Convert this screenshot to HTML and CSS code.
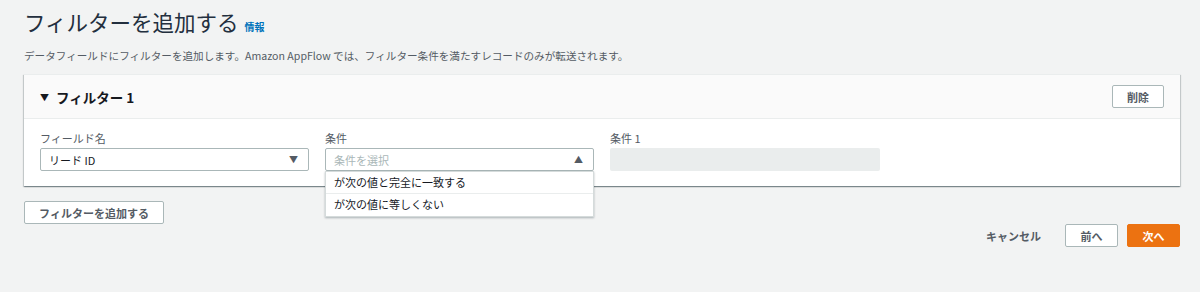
FILE: index.html
```html
<!DOCTYPE html>
<html lang="ja">
<head>
  <meta charset="UTF-8" />
  <title>フィルターを追加する</title>
  <link rel="stylesheet" href="styles.css">
</head>
<body>
  <div class="page">
    <h1 class="title">フィルターを追加する <a class="info" href="#">情報</a></h1>
    <p class="desc">データフィールドにフィルターを追加します。Amazon AppFlow では、フィルター条件を満たすレコードのみが転送されます。</p>

    <div class="card">
      <div class="card-head">
        <span class="card-title"><span class="caret">▼</span> フィルター 1</span>
        <button class="btn">削除</button>
      </div>
      <div class="card-body">
        <div class="field">
          <label>フィールド名</label>
          <div class="select">
            <span>リード ID</span>
            <span class="arrow">▼</span>
          </div>
        </div>
        <div class="field">
          <label>条件</label>
          <div class="select open">
            <span class="placeholder">条件を選択</span>
            <span class="arrow">▲</span>
            <ul class="dropdown">
              <li>が次の値と完全に一致する</li>
              <li>が次の値に等しくない</li>
            </ul>
          </div>
        </div>
        <div class="field">
          <label>条件 1</label>
          <div class="input disabled"></div>
        </div>
      </div>
    </div>

    <button class="btn add">フィルターを追加する</button>

    <div class="actions">
      <a class="cancel" href="#">キャンセル</a>
      <button class="btn">前へ</button>
      <button class="btn primary">次へ</button>
    </div>
  </div>
</body>
</html>
```

FILE: styles.css
```css
* { box-sizing: border-box; }

body {
  margin: 0;
  background: #f2f3f3;
  font-family: "Noto Sans CJK JP", "Noto Sans", sans-serif;
  color: #16191f;
}

.page {
  padding: 6px 20px 0 24px;
}

.title {
  margin: 0;
  font-size: 21.5px;
  line-height: 32px;
  font-weight: 400;
  color: #232f3e;
}

.info {
  font-size: 10px;
  font-weight: 700;
  color: #0073bb;
  text-decoration: none;
  margin-left: 1px;
}

.desc {
  margin: 4px 0 9px;
  font-size: 10.6px;
  line-height: 18px;
  color: #545b64;
}

.card {
  background: white;
  border-top: 1px solid #eaeded;
  box-shadow: 0 1px 1px 0 rgba(0,28,36,0.3), 1px 1px 1px 0 rgba(0,28,36,0.15), -1px 1px 1px 0 rgba(0,28,36,0.15);
}

.card-head {
  height: 44px;
  display: flex;
  align-items: center;
  justify-content: space-between;
  padding: 0 16px;
  background: #fafafa;
  border-bottom: 1px solid #eaeded;
}

.card-title {
  font-size: 13.5px;
  font-weight: 700;
  color: #16191f;
}

.caret {
  font-size: 9px;
  margin-right: 4px;
  vertical-align: 2px;
}

.card-body {
  display: grid;
  grid-template-columns: 269px 269px 270px;
  gap: 16px;
  padding: 10px 16px 15px;
}

.field label {
  display: block;
  font-size: 11px;
  line-height: 18px;
  color: #545b64;
  margin-bottom: 1px;
}

.select {
  position: relative;
  height: 23px;
  border: 1px solid #aab7b8;
  border-radius: 2px;
  background: white;
  display: flex;
  align-items: center;
  justify-content: space-between;
  padding: 0 8px;
  font-size: 11px;
  color: #16191f;
}

.arrow {
  font-size: 9px;
  color: #545b64;
  margin-right: 2px;
}

.placeholder {
  color: #aab7b8;
}

.dropdown {
  position: absolute;
  top: 22px;
  left: -1px;
  right: -1px;
  margin: 0;
  padding: 0;
  list-style: none;
  background: white;
  border: 1px solid #d5dbdb;
  box-shadow: 0 1px 2px rgba(0,28,36,0.3);
  z-index: 10;
}

.dropdown li {
  height: 22px;
  line-height: 21px;
  padding: 0 8px;
  font-size: 11px;
  color: #16191f;
  border-bottom: 1px solid #eaeded;
}

.dropdown li:last-child {
  border-bottom: none;
}

.input {
  height: 23px;
  border-radius: 2px;
}

.input.disabled {
  background: #eaeded;
}

.btn {
  height: 23px;
  padding: 0 12px;
  font-family: inherit;
  font-size: 11px;
  font-weight: 700;
  color: #545b64;
  background: white;
  border: 1px solid #aab7b8;
  border-radius: 2px;
  white-space: nowrap;
  cursor: pointer;
}

.card-head .btn {
  width: 52px;
  padding: 0;
}

.add {
  display: block;
  width: 140px;
  margin-top: 15px;
}

.actions {
  display: flex;
  justify-content: flex-end;
  align-items: center;
  gap: 9px;
}

.actions .btn {
  width: 53px;
  padding: 0;
}

.cancel {
  font-size: 11px;
  font-weight: 700;
  color: #545b64;
  text-decoration: none;
  margin-right: 15px;
}

.btn.primary {
  background: #ec7211;
  border-color: #ec7211;
  color: white;
}
```
